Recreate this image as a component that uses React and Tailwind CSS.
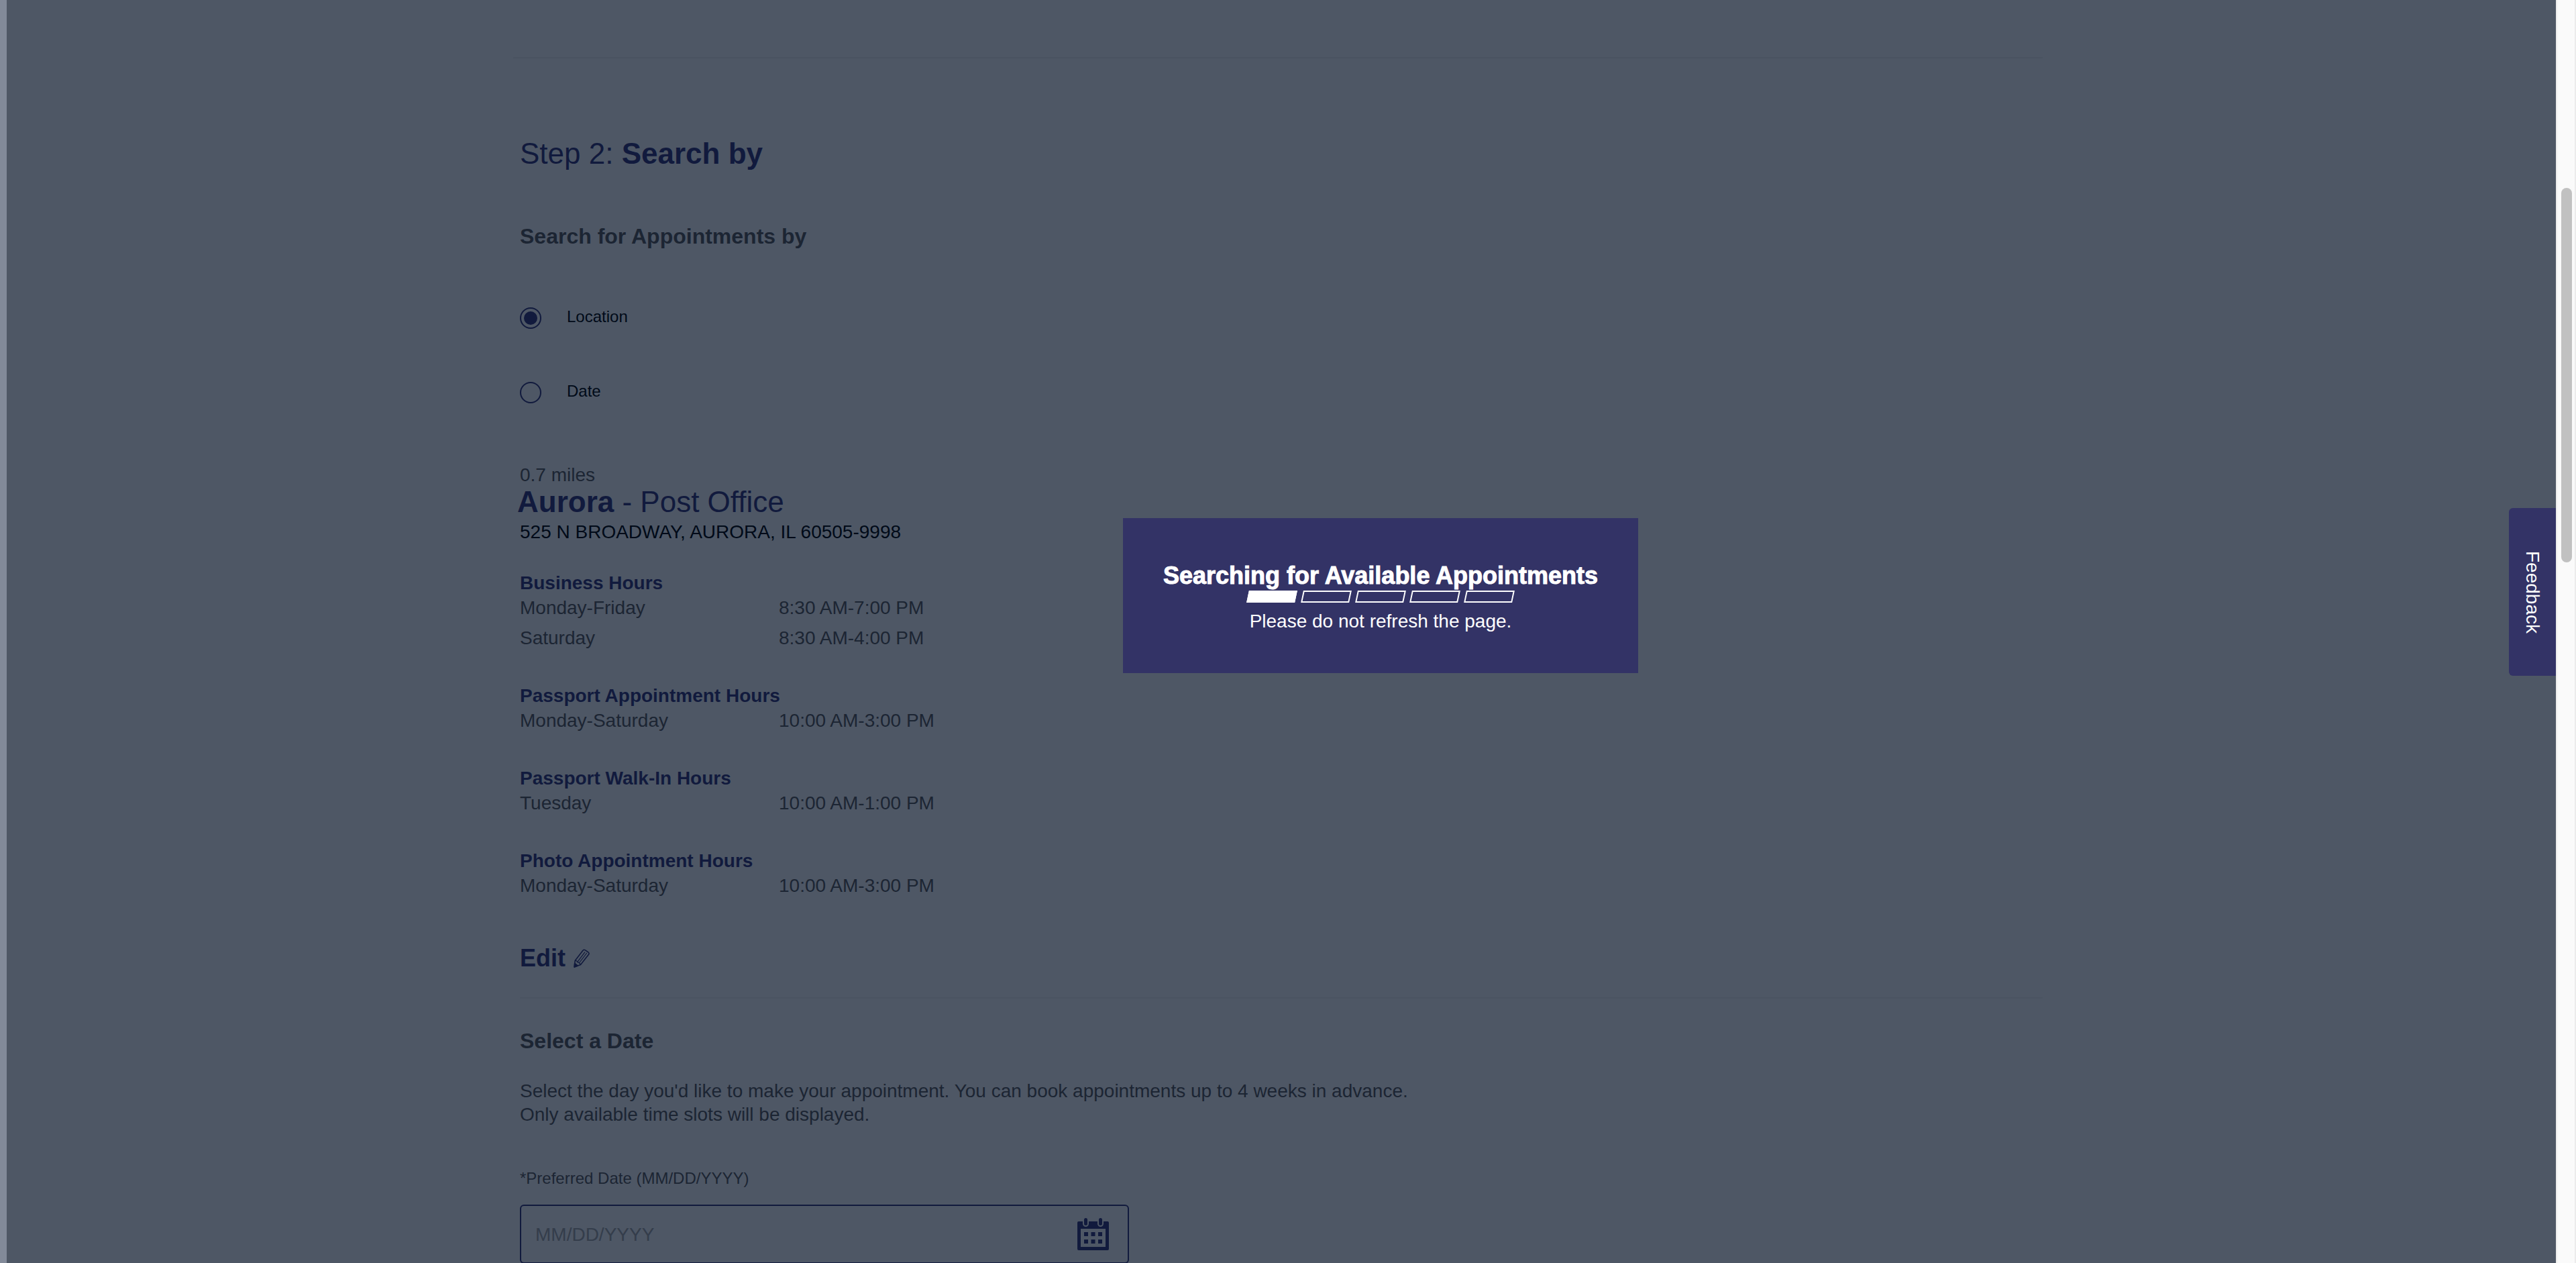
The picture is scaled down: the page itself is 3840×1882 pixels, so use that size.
const hours = [
  { title: 'Business Hours', rows: [['Monday-Friday', '8:30 AM-7:00 PM'], ['Saturday', '8:30 AM-4:00 PM']] },
  { title: 'Passport Appointment Hours', rows: [['Monday-Saturday', '10:00 AM-3:00 PM']] },
  { title: 'Passport Walk-In Hours', rows: [['Tuesday', '10:00 AM-1:00 PM']] },
  { title: 'Photo Appointment Hours', rows: [['Monday-Saturday', '10:00 AM-3:00 PM']] },
];

function Pencil() {
  return (
    <svg className="h-7 w-6" viewBox="0 0 24 28" fill="none" stroke="#111a3d" strokeWidth="1.6" strokeLinejoin="round" aria-hidden="true">
      <path d="M2.200 17.500 14 2.200Q15.500 .5 17.500 1.800L22 5Q23.800 6.500 22.500 8.300L10.500 23.500 1.200 27Z" />
      <path d="M2.200 17.500Q5 17 5.600 19.700Q8.800 20 10.500 23.500M5.600 19.700 17 4.600M8.200 21 19.800 6" strokeWidth="1.200" />
      <path d="M1.200 27 1.600 21.500 6.200 25Z" fill="#111a3d" />
    </svg>
  );
}

function CalendarIcon() {
  return (
    <svg className="h-12 w-[47px]" viewBox="0 0 47 48" aria-hidden="true">
      <path fill="#111a3d" fillRule="evenodd" d="M2 5H45Q47 5 47 7V46Q47 48 45 48H2Q0 48 0 46V7Q0 5 2 5ZM5 16V43H42V16Z" />
      <rect x="8" y="-2" width="9" height="15" rx="4.500" fill="#4e5765" />
      <rect x="30" y="-2" width="9" height="15" rx="4.500" fill="#4e5765" />
      <rect x="10" y="0" width="5" height="11" rx="2.500" fill="#111a3d" />
      <rect x="32" y="0" width="5" height="11" rx="2.500" fill="#111a3d" />
      <path fill="#111a3d" d="M10 21h6v6h-6zM20.500 21h6v6h-6zM31 21h6v6h-6zM10 32h6v6h-6zM20.500 32h6v6h-6zM31 32h6v6h-6z" />
    </svg>
  );
}

function Choice({ label, checked }) {
  return (
    <label className="flex h-8 items-center gap-[38px] text-2xl leading-7 text-[#000a18]">
      <input
        type="radio"
        name="search-by"
        defaultChecked={checked}
        className="size-8 appearance-none rounded-full border-2 border-[#111a3d] bg-clip-content p-1 checked:bg-[#111a3d]"
      />
      <span className="pb-1">{label}</span>
    </label>
  );
}

export default function App() {
  return (
    <div className="flex h-screen overflow-hidden bg-[#4e5765] font-['Liberation_Sans',Arial,sans-serif] text-[28px] leading-[35px] text-[#1c2533]">
      <div className="w-2.5 shrink-0 bg-[#828a99]" />
      <div className="relative min-w-0 flex-1 pr-2.5">
        <main className="mx-auto max-w-[2280px] pt-[85px]">
          <hr className="border-t-2 border-[#4a5361]" />
          <div className="pl-2.5">
            <h2 className="mt-[116px] text-[44px] leading-[52px] text-[#111a3d]">
              Step 2: <strong>Search by</strong>
            </h2>
            <fieldset className="mt-[77px]">
              <legend className="text-[32px] leading-10 font-bold">Search for Appointments by</legend>
              <div className="mt-[86px] flex flex-col gap-[79px]">
                <Choice label="Location" checked />
                <Choice label="Date" />
              </div>
            </fieldset>
            <section className="mt-[89px]">
              <p>0.7 miles</p>
              <h3 className="-ml-1 mb-1 text-[44px] leading-[46px] text-[#111a3d]">
                <strong>Aurora</strong> - Post Office
              </h3>
              <p className="text-[#000a18]">525 N BROADWAY, AURORA, IL 60505-9998</p>
              <div className="mt-[41px] flex flex-col gap-[43px]">
                {hours.map((group) => (
                  <table key={group.title} className="w-[680px] table-fixed text-left">
                    <caption className="text-left font-bold whitespace-nowrap text-[#111a3d]">{group.title}</caption>
                    <tbody>
                      {group.rows.map(([day, time]) => (
                        <tr key={day}>
                          <th scope="row" className="w-[386px] pt-0.5 pb-2 font-normal">{day}</th>
                          <td className="pt-0.5 pb-2">{time}</td>
                        </tr>
                      ))}
                    </tbody>
                  </table>
                ))}
              </div>
              <button type="button" className="mt-[63px] flex items-center gap-3 text-4xl leading-10 font-bold text-[#111a3d]">
                Edit <Pencil />
              </button>
            </section>
            <hr className="mt-[38px] border-t-2 border-[#4a5361]" />
            <section>
              <h3 className="mt-[43px] text-[32px] leading-10 font-bold">Select a Date</h3>
              <p className="mt-[37px]">
                Select the day you'd like to make your appointment. You can book appointments up to 4 weeks in advance.
                <br />
                Only available time slots will be displayed.
              </p>
              <label htmlFor="preferred-date" className="mt-16 block text-2xl leading-7">
                *Preferred Date (MM/DD/YYYY)
              </label>
              <div className="mt-[25px] flex h-[88px] w-2/5 items-center rounded-md border-2 border-[#111a3d] pr-7 pl-[21px]">
                <input
                  id="preferred-date"
                  type="text"
                  placeholder="MM/DD/YYYY"
                  className="min-w-0 flex-1 bg-transparent outline-none placeholder:text-[#343d4b]"
                />
                <button type="button" aria-label="Open calendar">
                  <CalendarIcon />
                </button>
              </div>
            </section>
          </div>
        </main>

        <div className="absolute inset-0 flex items-center justify-center pb-[108px] pl-[296px]">
          <div role="dialog" aria-labelledby="search-status" className="flex flex-col items-center bg-[#333366] px-[60px] pt-16 pb-[52px] text-white">
            <h2 id="search-status" className="text-4xl leading-11 font-bold [-webkit-text-stroke:1px_white]">
              Searching for Available Appointments
            </h2>
            <div className="flex gap-[9px]">
              <span className="h-[18px] w-[72px] -skew-x-12 border-2 border-white bg-white" />
              <span className="h-[18px] w-[72px] -skew-x-12 border-2 border-white" />
              <span className="h-[18px] w-[72px] -skew-x-12 border-2 border-white" />
              <span className="h-[18px] w-[72px] -skew-x-12 border-2 border-white" />
              <span className="h-[18px] w-[72px] -skew-x-12 border-2 border-white" />
            </div>
            <p className="pt-2.5 pb-2">Please do not refresh the page.</p>
          </div>
        </div>

        <button type="button" className="absolute top-[757px] right-0 flex h-[250px] w-[70px] items-center justify-center rounded-l-md bg-[#333366] text-white [writing-mode:vertical-rl]">
          Feedback
        </button>
      </div>
      <div className="w-[30px] shrink-0 border-x-2 border-[#ececec] bg-[#fafafa] pt-[280px] pl-1.5">
        <div className="h-[558px] w-4 rounded-full bg-[#c1c1c1]" />
      </div>
    </div>
  );
}
